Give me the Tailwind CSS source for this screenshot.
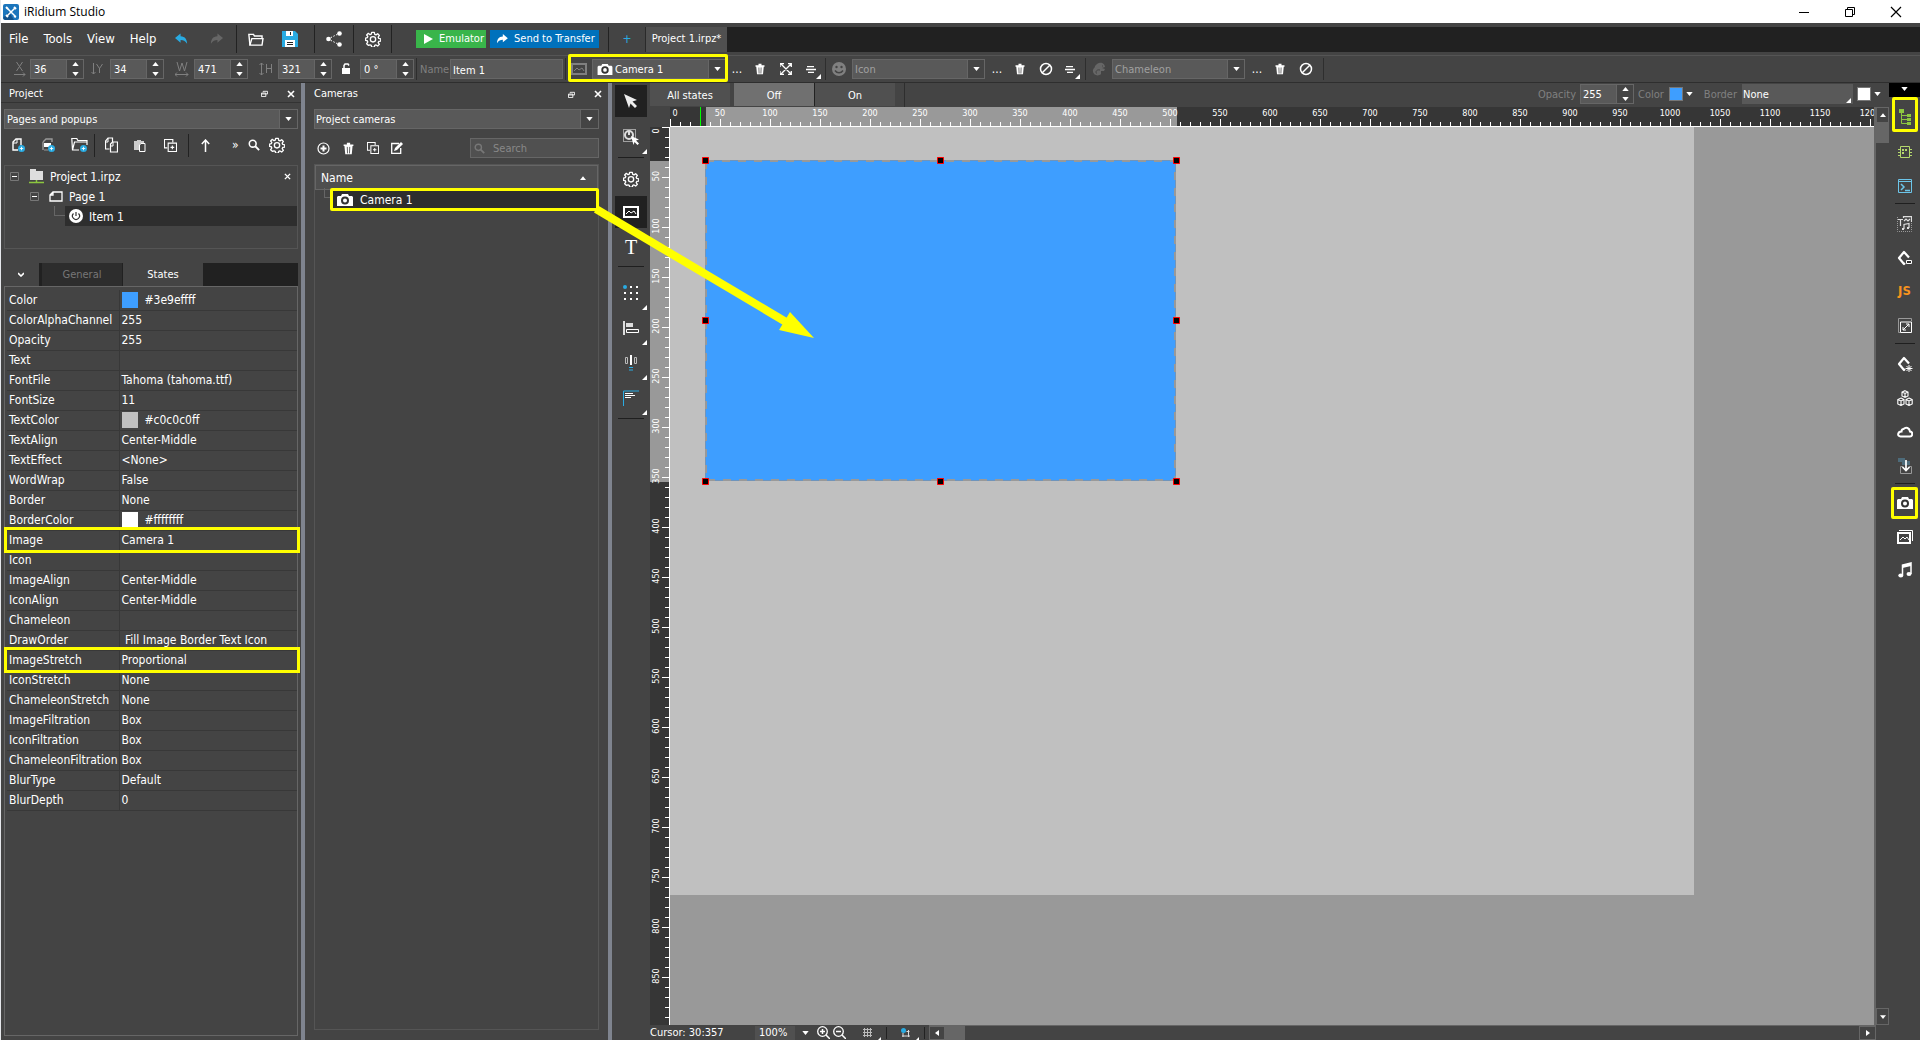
<!DOCTYPE html>
<html lang="en">
<head>
    <meta charset="UTF-8">
    <meta name="viewport" content="width=device-width, initial-scale=1.0">
    <title>iRidium Studio</title>
    <script src="https://cdn.jsdelivr.net/npm/@tailwindcss/browser@4"></script>
</head>
<body class="relative flex h-screen flex-col overflow-hidden border-l border-gray-200 bg-[#444444] font-['DejaVu_Sans_Condensed','DejaVu_Sans',sans-serif] text-[12px] leading-4 text-white">

    <!-- Icon set -->
    <svg class="hidden">
        <symbol id="i-gear" viewBox="0 0 24 24"><path d="M10 2h4l.6 3 1.9.8L19 4l2.500 2.700-1.700 2.500.8 1.900 3 .6v3.400l-3 .6-.8 1.900 1.700 2.500-2.500 2.500-2.500-1.700-1.900.8-.6 2.500h-4l-.6-2.500-1.900-.8L5 21.500 2.500 19l1.700-2.500-.8-1.900-2.600-.6v-3.400l2.600-.6.8-1.900L2.500 6 5 3.500l2.500 2 1.900-.8z" fill="none" stroke="currentColor" stroke-width="2" stroke-linejoin="round"/><circle cx="12" cy="12.500" r="4" fill="none" stroke="currentColor" stroke-width="2"/></symbol>
        <symbol id="i-trash" viewBox="0 0 16 16"><path d="M2 3h12v2H2zM6 1h4v2H6zM3 5h10l-1 10H4z" fill="currentColor"/><path d="M6.500 6l.3 8M9.500 6l-.3 8" stroke="#444444"/></symbol>
        <symbol id="i-camera" viewBox="0 0 16 14"><path d="M1 3h3l1-2h6l1 2h3l1 1v9H0V4z" fill="currentColor"/><circle cx="8" cy="7.500" r="3" fill="none" stroke="#333" stroke-width="2"/></symbol>
        <symbol id="i-down" viewBox="0 0 8 5"><path d="M0 0h8L4 5z" fill="currentColor"/></symbol>
        <symbol id="i-up" viewBox="0 0 8 5"><path d="M0 5h8L4 0z" fill="currentColor"/></symbol>
        <symbol id="i-corner" viewBox="0 0 5 5"><path d="M5 0v5H0z" fill="currentColor"/></symbol>
        <symbol id="i-ban" viewBox="0 0 14 14"><circle cx="7" cy="7" r="5.500" fill="none" stroke="currentColor" stroke-width="1.500"/><path d="M3 11l8-8" stroke="currentColor" stroke-width="1.500"/></symbol>
        <symbol id="i-lines" viewBox="0 0 10 7"><path d="M1 .5h7M0 3.500h10M2 6.500h6" stroke="currentColor" stroke-width="1.300"/></symbol>
        <symbol id="i-copy" viewBox="0 0 14 14"><path d="M3.500 9.500h-3v-9h9v3M4.500 4.500h9v9h-9z" fill="none" stroke="currentColor" stroke-width="1.200"/><path d="M7 9h4M9 7v4" stroke="currentColor" stroke-width="1.200"/></symbol>
        <symbol id="i-search" viewBox="0 0 14 14"><circle cx="5.500" cy="5.500" r="4" fill="none" stroke="currentColor" stroke-width="1.800"/><path d="M8.500 8.500L13 13" stroke="currentColor" stroke-width="2.200"/></symbol>
        <symbol id="i-float" viewBox="0 0 8 8"><path d="M2.500 2.500v-1h5v3h-2M.5 3.500h5v4h-5zM.5 4.500h5" fill="none" stroke="currentColor"/></symbol>
        <symbol id="i-close" viewBox="0 0 8 8"><path d="M1 1l6 6M7 1L1 7" stroke="currentColor" stroke-width="1.600"/></symbol>
        <symbol id="i-picture" viewBox="0 0 16 12"><path d="M1 1h14v10H1z" fill="none" stroke="currentColor" stroke-width="2"/><path d="M3 8l3-3 2 2 3-2 2 3" fill="none" stroke="currentColor"/></symbol>
        <symbol id="i-plus" viewBox="0 0 8 8"><circle cx="4" cy="4" r="4" fill="#29abe2"/><path d="M2 4h4M4 2v4" stroke="#fff"/></symbol>
        <symbol id="i-minus" viewBox="0 0 9 9"><path d="M.5.5h8v8h-8z" fill="none" stroke="#777"/><path d="M2 4.500h5" stroke="#fff"/></symbol>
        <symbol id="i-diamond" viewBox="0 0 16 16"><path d="M8 13l-1 1-5-6 5-6 5 5.500" fill="none" stroke="currentColor" stroke-width="2.200" stroke-linejoin="round"/></symbol>
    </svg>

    <!-- Title bar -->
    <header class="flex h-[23px] shrink-0 items-center bg-white pl-0.5 font-['Open_Sans',sans-serif] text-black">
        <svg class="h-4 w-4" viewBox="0 0 16 16"><rect width="16" height="16" rx="2" fill="#1b75bc"/><path d="M0 14l6-6 5 8H2z" fill="#12518a"/><path d="M4 12l8-8M4 4l8 8" stroke="#fff" stroke-width="1.500"/><path d="M11 3l2 2M3 3l2 2M3 11l2 2M11 12l2 1" stroke="#fff" stroke-width="2"/></svg>
        <h1 class="ml-[5px]">iRidium Studio</h1>
        <div class="ml-auto flex items-center gap-[34px] pr-[18px]">
            <button aria-label="Minimize"><svg class="h-3 w-3" viewBox="0 0 12 12"><path d="M1 6.500h10" stroke="#000"/></svg></button>
            <button aria-label="Restore"><svg class="h-3 w-3" viewBox="0 0 12 12"><path d="M1.500 3.500h7v7h-7zM3.500 3V1.500h7v7H9" fill="none" stroke="#000"/></svg></button>
            <button aria-label="Close"><svg class="h-3 w-3" viewBox="0 0 12 12"><path d="M1 1l10 10M11 1L1 11" stroke="#000" stroke-width="1.200"/></svg></button>
        </div>
    </header>

    <!-- Main toolbar -->
    <div class="flex h-[33px] shrink-0 items-center border-b border-[#555]">
        <nav class="flex w-[158px] gap-[15px] pl-2 text-[13px]">
            <a href="#file">File</a>
            <a href="#tools">Tools</a>
            <a href="#view">View</a>
            <a href="#help">Help</a>
        </nav>
        <div class="flex w-[77px] items-center gap-[22px] pl-4">
            <button aria-label="Undo"><svg class="h-3 w-[13px] text-[#29abe2]" viewBox="0 0 14 12"><path d="M6 0v3c5 0 7 4 7 8-2-3-4-4-7-4v3L0 5z" fill="currentColor"/></svg></button>
            <button aria-label="Redo"><svg class="h-3 w-[13px] text-[#666]" viewBox="0 0 14 12"><path d="M8 0v3c-5 0-7 4-7 8 2-3 4-4 7-4v3l6-5z" fill="currentColor"/></svg></button>
        </div>
        <div class="flex h-7 w-[78px] items-center gap-[18px] border-l border-[#222] pl-[11px]">
            <button aria-label="Open"><svg class="h-[13px] w-4" viewBox="0 0 17 14"><path d="M2 13L.8 1.500h5l1 1.700H15V6" fill="none" stroke="#fff" stroke-width="1.500"/><path d="M2 13L4 6h12l-1 7z" fill="none" stroke="#fff" stroke-width="1.500"/></svg></button>
            <button aria-label="Save"><svg class="h-4 w-4" viewBox="0 0 16 16"><path d="M0 0h13l3 3v13H0z" fill="#29abe2"/><path d="M4 0h7v5H4zM3 9h10v7H3z" fill="#fff"/><path d="M8.500 1v3M5 11.500h6M5 13.500h6" stroke="#222"/></svg></button>
        </div>
        <div class="flex h-7 w-[39px] items-center border-l border-[#222] pl-[11px]">
            <button aria-label="Share"><svg class="h-4 w-4" viewBox="0 0 16 16"><path d="M2 8l12-6M2 8l12 6" stroke="#fff" stroke-dasharray="1.500 1.500"/><g fill="#fff"><circle cx="2.500" cy="8" r="2.300"/><circle cx="13.500" cy="2.500" r="2.300"/><circle cx="13.500" cy="13.500" r="2.300"/></g></svg></button>
        </div>
        <div class="flex h-7 w-[39px] items-center border-x border-[#222] pl-[11px]">
            <button aria-label="Settings"><svg class="h-4 w-4"><use href="#i-gear"/></svg></button>
        </div>
        <button class="ml-6 flex h-[18px] w-[70px] items-center gap-1.5 bg-[#39b54a] pl-2 text-[11px]"><svg class="h-[10px] w-[9px]" viewBox="0 0 9 10"><path d="M0 0l9 5-9 5z" fill="#fff"/></svg>Emulator</button>
        <button class="ml-1 flex h-[18px] w-[109px] items-center gap-1.5 bg-[#0071bc] pl-1.5 text-[11px]"><svg class="h-[10px] w-3" viewBox="0 0 14 12"><path d="M8 0v3c-5 0-7 4-7 8 2-3 4-4 7-4v3l6-5z" fill="#fff"/></svg>Send to Transfer</button>
        <div class="ml-[9px] flex h-[25px] flex-1 border-l border-[#222] bg-[#212121]">
            <button class="w-[37px] border-r border-[#2a2a2a] bg-[#444] text-[#29abe2]" aria-label="New tab">+</button>
            <button class="w-[81px] bg-[#505050] text-[11px]">Project 1.irpz*</button>
        </div>
    </div>

    <!-- Item property bar -->
    <div class="flex h-[27px] shrink-0 items-center border-b border-[#2e2e2e] text-[#808080]">
        <label class="flex w-[29px] justify-center pl-2" for="pos-x"><svg class="h-4 w-3" viewBox="0 0 12 16"><path d="M2.500 1l6 9M8.500 1l-6 9M0 13.500h11M9 11.500l2 2-2 2" fill="none" stroke="currentColor"/></svg></label>
        <span class="spin flex h-5 w-[54px] border border-[#666] bg-[#595959]"><input id="pos-x" value="36" class="w-[35px] pt-0.5 pl-[3px] text-[11px] text-white"></span>
        <label class="flex w-[26px] justify-center" for="pos-y"><svg class="h-4 w-3" viewBox="0 0 12 16"><path d="M2.500 2v11M.5 11l2 2 2-2M5.500 3l3 4.500L11.500 3M8.500 7v5" fill="none" stroke="currentColor"/></svg></label>
        <span class="spin flex h-5 w-[54px] border border-[#666] bg-[#595959]"><input id="pos-y" value="34" class="w-[35px] pt-0.5 pl-[3px] text-[11px] text-white"></span>
        <label class="flex w-[30px] justify-end pr-[5px]" for="size-w"><svg class="h-4 w-[14px]" viewBox="0 0 14 16"><path d="M2 1l2.500 9L7 2l2.500 8L12 1M0 13.500h13M2 11.500l-2 2 2 2M11 11.500l2 2-2 2" fill="none" stroke="currentColor"/></svg></label>
        <span class="spin flex h-5 w-[54px] border border-[#666] bg-[#595959]"><input id="size-w" value="471" class="w-[35px] pt-0.5 pl-[3px] text-[11px] text-white"></span>
        <label class="flex w-[30px] justify-end pr-[5px]" for="size-h"><svg class="h-4 w-[14px]" viewBox="0 0 14 16"><path d="M2.500 2v12M.5 4l2-2 2 2M.5 12l2 2 2-2M7.500 3v9M12.500 3v9M7.500 7.500h5" fill="none" stroke="currentColor"/></svg></label>
        <span class="spin flex h-5 w-[54px] border border-[#666] bg-[#595959]"><input id="size-h" value="321" class="w-[35px] pt-0.5 pl-[3px] text-[11px] text-white"></span>
        <button class="flex w-7 justify-center text-white" aria-label="Lock proportions"><svg class="h-3 w-2.5" viewBox="0 0 10 12"><path d="M1 5h8v6H1z" fill="currentColor"/><path d="M3 5V2.500L4 1h3l1 1.500" fill="none" stroke="currentColor" stroke-width="1.500"/></svg></button>
        <span class="spin flex h-5 w-[54px] border border-[#666] bg-[#595959]"><input id="angle" value="0 °" aria-label="Rotation" class="w-[35px] pt-0.5 pl-[3px] text-[11px] text-white"></span>
        <label class="ml-0.5 flex h-[22px] w-[34px] items-center border-l border-[#2e2e2e] pt-0.5 pl-[3px] text-[11px]" for="name">Name</label>
        <input id="name" value="Item 1" class="h-5 w-[113px] border border-[#666] bg-[#595959] pt-0.5 pl-0.5 text-[11px] text-white">
        <div class="relative ml-0.5 flex h-[22px] items-center border-l border-[#2e2e2e] pl-[5px]">
            <svg class="h-3 w-4"><use href="#i-picture"/></svg>
            <span class="ml-[5px] flex h-5 w-[134px] items-center border border-[#666] bg-[#595959] pl-1 text-white">
                <svg class="h-[13px] w-4 shrink-0"><use href="#i-camera"/></svg>
                <select class="min-w-0 flex-1 appearance-none pt-0.5 pl-0.5 text-[11px]" aria-label="Image"><option>Camera 1</option></select>
                <span class="pointer-events-none flex h-full w-[17px] items-center justify-center border-l border-[#666] bg-[#444]"><svg class="h-1 w-[7px]"><use href="#i-down"/></svg></span>
            </span>
            <span class="pointer-events-none absolute -top-1 -right-0.5 bottom-[-2px] left-[2px] rounded-xs border-3 border-[#ffff00]"></span>
        </div>
        <div class="flex w-[99px] items-center text-white">
            <button class="w-[22px] text-center" aria-label="Browse image">...</button>
            <button class="ml-1.5" aria-label="Clear image"><svg class="h-3 w-3"><use href="#i-trash"/></svg></button>
            <button class="ml-3.5" aria-label="Stretch image"><svg class="h-3 w-3" viewBox="0 0 12 12"><path d="M1 1l10 10M11 1L1 11M0 4V.7h4M8 .7h3.300V4M0 8v3.300h4M8 11.300h3.300V8" fill="none" stroke="currentColor" stroke-width="1.300"/></svg></button>
            <button class="ml-3.5 flex items-center" aria-label="Image align"><svg class="h-[7px] w-[10px]"><use href="#i-lines"/></svg><svg class="mt-[14px] h-[5px] w-[5px]"><use href="#i-corner"/></svg></button>
        </div>
        <div class="flex h-[22px] w-[260px] items-center border-l border-[#2e2e2e] pl-1.5">
            <svg class="h-[14px] w-[14px]" viewBox="0 0 14 14"><circle cx="7" cy="7" r="7" fill="currentColor"/><circle cx="4.500" cy="5" r="1.200" fill="#444"/><circle cx="9.500" cy="5" r="1.200" fill="#444"/><path d="M3 8.500c2 3 6 3 8 0" fill="none" stroke="#444" stroke-width="1.500"/></svg>
            <span class="ml-1.5 flex h-5 w-[133px] items-center border border-[#666] bg-[#595959]">
                <select class="min-w-0 flex-1 appearance-none pt-0.5 pl-0.5 text-[11px] text-[#a0a0a0]" aria-label="Icon"><option>Icon</option></select>
                <span class="pointer-events-none flex h-full w-[17px] items-center justify-center border-l border-[#666] bg-[#444] text-white"><svg class="h-1 w-[7px]"><use href="#i-down"/></svg></span>
            </span>
            <button class="w-6 text-center text-white" aria-label="Browse icon">...</button>
            <button class="ml-[5px] text-white" aria-label="Clear icon"><svg class="h-3 w-3"><use href="#i-trash"/></svg></button>
            <button class="ml-[13px] text-white" aria-label="No icon"><svg class="h-[14px] w-[14px]"><use href="#i-ban"/></svg></button>
            <button class="ml-3 flex items-center text-white" aria-label="Icon align"><svg class="h-[7px] w-[10px]"><use href="#i-lines"/></svg><svg class="mt-[14px] h-[5px] w-[5px]"><use href="#i-corner"/></svg></button>
        </div>
        <div class="flex h-[22px] w-[239px] items-center border-x border-[#2e2e2e] pl-1.5">
            <svg class="h-[14px] w-[14px] text-[#666]" viewBox="0 0 14 14"><path d="M5 2c4-3 8 0 8 3l-3 1 3 1-1 2H9v3c-3 3-9 1-8-4 .5-2 2-2 2-4z" fill="currentColor"/><path d="M8 8c-4-1-5 3-3 3.500M10 4h1" fill="none" stroke="#444"/></svg>
            <span class="ml-1.5 flex h-5 w-[133px] items-center border border-[#666] bg-[#595959]">
                <select class="min-w-0 flex-1 appearance-none pt-0.5 pl-0.5 text-[11px] text-[#a0a0a0]" aria-label="Chameleon"><option>Chameleon</option></select>
                <span class="pointer-events-none flex h-full w-[17px] items-center justify-center border-l border-[#666] bg-[#444] text-white"><svg class="h-1 w-[7px]"><use href="#i-down"/></svg></span>
            </span>
            <button class="w-6 text-center text-white" aria-label="Browse chameleon">...</button>
            <button class="ml-[5px] text-white" aria-label="Clear chameleon"><svg class="h-3 w-3"><use href="#i-trash"/></svg></button>
            <button class="ml-[13px] text-white" aria-label="No chameleon"><svg class="h-[14px] w-[14px]"><use href="#i-ban"/></svg></button>
        </div>
    </div>

    <main class="flex min-h-0 flex-1">
        <!-- Project panel -->
        <section class="flex w-[300px] shrink-0 flex-col">
            <div class="flex h-5 items-center border-b border-[#333] pt-0.5 pr-[6px] pl-2 text-[11px]">
                <h2>Project</h2>
                <button class="ml-auto" aria-label="Float panel"><svg class="h-[7px] w-[7px]"><use href="#i-float"/></svg></button>
                <button class="ml-[19px]" aria-label="Close panel"><svg class="h-2 w-2"><use href="#i-close"/></svg></button>
            </div>
            <div class="mt-1.5 mr-[3px] ml-[3px] flex h-5 shrink-0 items-center border border-[#666] bg-[#595959]">
                <select class="flex-1 appearance-none pt-0.5 pl-0.5 text-[11px]" aria-label="Project view"><option>Pages and popups</option></select>
                <span class="pointer-events-none flex h-full w-[18px] items-center justify-center border-l border-[#666] bg-[#444]"><svg class="h-1 w-[7px]"><use href="#i-down"/></svg></span>
            </div>
            <div class="mt-1 flex h-6 shrink-0 items-center">
                <div class="flex w-[93px] gap-[14px] pl-2.5">
                    <button aria-label="Add page"><svg class="h-4 w-4" viewBox="0 0 16 16"><path d="M7 13H2V5l3-3h5v6" fill="none" stroke="#fff" stroke-width="1.400"/><path d="M2 6h4V2" fill="none" stroke="#fff"/><use href="#i-plus" x="7" y="8" width="7" height="7"/></svg></button>
                    <button aria-label="Add popup"><svg class="h-4 w-4" viewBox="0 0 16 16"><path d="M2 5l3-3h6v3M2 13V5" fill="none" stroke="#999" stroke-width="1.400"/><path d="M3 6h7v4H3z" fill="#fff"/><path d="M3 13h4" stroke="#999"/><use href="#i-plus" x="7" y="8" width="7" height="7"/></svg></button>
                    <button aria-label="Add folder"><svg class="h-4 w-[17px]" viewBox="0 0 17 16"><path d="M8 13H1.500L.8 1.500h5l1 2H16V8M1.500 13l2-8H16" fill="none" stroke="#fff" stroke-width="1.200"/><use href="#i-plus" x="9" y="8" width="7" height="7"/></svg></button>
                </div>
                <div class="flex h-[23px] w-[94px] items-center gap-4 border-l border-[#222] pl-2.5">
                    <button aria-label="Copy"><svg class="h-4 w-[13px]" viewBox="0 0 13 16"><path d="M4.500 12h-4V4L3 1h4.500v4M6 6.500L7.500 5h5v10h-7V7z" fill="none" stroke="#fff" stroke-width="1.200"/><path d="M5.500 9H8V5M.5 5H3V1" fill="none" stroke="#fff"/></svg></button>
                    <button aria-label="Paste"><svg class="h-[13px] w-3" viewBox="0 0 12 13"><path d="M0 2h3V1h4v1h3v9H0z" fill="#ccc"/><path d="M5.500 6L7 4.500h4v8H5.500z" fill="#444" stroke="#fff"/></svg></button>
                    <button aria-label="Duplicate"><svg class="ml-0.5 h-[13px] w-[13px]"><use href="#i-copy"/></svg></button>
                </div>
                <div class="flex h-[23px] flex-1 items-center border-l border-[#222] pl-3">
                    <button aria-label="Move up"><svg class="h-[13px] w-[9px]" viewBox="0 0 9 13"><path d="M4.500 13V1M.8 5l3.700-4 3.700 4" fill="none" stroke="#fff" stroke-width="1.500"/></svg></button>
                    <button class="ml-[22px]" aria-label="More">»</button>
                    <button class="ml-[9px]" aria-label="Search"><svg class="h-3 w-3"><use href="#i-search"/></svg></button>
                    <button class="ml-[9px]" aria-label="Settings"><svg class="h-4 w-4"><use href="#i-gear"/></svg></button>
                </div>
            </div>

            <!-- Project tree -->
            <ul class="mx-[3px] mt-2 h-[84px] shrink-0 border border-[#555]">
                <li class="flex h-5 items-center pr-[6px] pl-[5px]"><svg class="h-[9px] w-[9px]"><use href="#i-minus"/></svg>
                    <svg class="ml-2.5 h-4 w-[15px]" viewBox="0 0 15 16"><path d="M1 1h6v2h7v9H1z" fill="#ddd"/><path d="M0 14.500h15M7.500 12v2" stroke="#8cc63f" stroke-width="1.500"/></svg>
                    <span class="ml-1.5 pt-px">Project 1.irpz</span>
                    <button class="ml-auto" aria-label="Close project"><svg class="h-[7px] w-[7px]"><use href="#i-close"/></svg></button></li>
                <li class="flex h-5 items-center pl-[25px]"><svg class="h-[9px] w-[9px]"><use href="#i-minus"/></svg>
                    <svg class="ml-2.5 h-[11px] w-[14px]" viewBox="0 0 14 11"><path d="M1 4l3-3h9v9H1zM1 4h3V1" fill="none" stroke="#fff" stroke-width="1.300"/></svg>
                    <span class="ml-1.5 pt-px">Page 1</span></li>
                <li class="flex h-5 items-center pl-[49px]"><span class="mb-2.5 h-2.5 w-[11px] border-b border-l border-[#666]"></span>
                    <span class="flex h-5 flex-1 items-center bg-[#2e2e2e] pl-1"><svg class="h-[14px] w-[14px]" viewBox="0 0 14 14"><circle cx="7" cy="7" r="7" fill="#fff"/><path d="M4.500 4.500a3.500 3.500 0 1 0 5 0M7 3v4" fill="none" stroke="#333" stroke-width="1.200"/></svg><span class="ml-1.5 pt-px">Item 1</span></span></li>
            </ul>

            <!-- Property tabs -->
            <div class="mx-[3px] mt-[14px] flex h-[23px] shrink-0">
                <button class="w-[35px] pl-[14px]" aria-label="Collapse"><svg class="h-[5px] w-1.5" viewBox="0 0 6 5"><path d="M0 1l3 3 3-3" fill="none" stroke="#fff" stroke-width="1.600"/></svg></button>
                <div class="flex flex-1 bg-[#212121] pl-[3px] text-[11px]">
                    <button class="w-20 bg-[#2d2d2d] pt-px text-[#777]">General</button>
                    <button class="ml-px w-20 bg-[#444] pt-px">States</button>
                </div>
            </div>
            <div class="mx-[3px] mb-1 min-h-0 flex-1 border border-[#666] pt-[3px] pr-0 pl-0.5">
                <table class="w-full table-fixed border-collapse">
                    <colgroup><col class="w-[112px]"><col></colgroup>
                    <tbody id="props"></tbody>
                </table>
            </div>
        </section>

        <div class="w-1 shrink-0 bg-[#7f848f]"></div>

        <!-- Cameras panel -->
        <section class="flex w-[303px] shrink-0 flex-col pr-[9px] pl-[9px]">
            <div class="flex h-5 shrink-0 items-center pt-0.5 text-[11px]">
                <h2>Cameras</h2>
                <button class="ml-auto" aria-label="Float panel"><svg class="h-[7px] w-[7px]"><use href="#i-float"/></svg></button>
                <button class="-mr-[3px] ml-[19px]" aria-label="Close panel"><svg class="h-2 w-2"><use href="#i-close"/></svg></button>
            </div>
            <div class="mt-1.5 flex h-5 shrink-0 items-center border border-[#666] bg-[#595959]">
                <select class="flex-1 appearance-none pt-0.5 pl-px text-[11px]" aria-label="Camera source"><option>Project cameras</option></select>
                <span class="pointer-events-none flex h-full w-[18px] items-center justify-center border-l border-[#666] bg-[#444]"><svg class="h-1 w-[7px]"><use href="#i-down"/></svg></span>
            </div>
            <div class="mt-[9px] flex h-5 shrink-0 items-center gap-3 pl-[3px]">
                <button aria-label="Add camera"><svg class="h-[13px] w-[13px]" viewBox="0 0 13 13"><circle cx="6.500" cy="6.500" r="5.500" fill="none" stroke="#fff" stroke-width="1.200"/><path d="M3.500 6.500h6M6.500 3.500v6" stroke="#fff" stroke-width="2"/></svg></button>
                <button aria-label="Delete camera"><svg class="h-[13px] w-[13px]"><use href="#i-trash"/></svg></button>
                <button aria-label="Duplicate camera"><svg class="h-3 w-3"><use href="#i-copy"/></svg></button>
                <button aria-label="Edit camera"><svg class="h-3 w-3" viewBox="0 0 12 12"><path d="M8 1.500H.7v9.800h9V6" fill="none" stroke="#fff" stroke-width="1.300"/><path d="M3 9l1-3 6-6 2 2-6 6z" fill="#fff"/></svg></button>
                <label class="ml-auto flex h-5 w-[129px] items-center gap-2 border border-[#666] bg-[#505050] pl-[3px] text-[#777]">
                    <svg class="h-[11px] w-[11px] shrink-0"><use href="#i-search"/></svg>
                    <input type="search" placeholder="Search" aria-label="Search" class="w-full pt-0.5 text-[11px] placeholder:text-[#888]">
                </label>
            </div>
            <div class="mt-1.5 mb-2.5 flex-1 border border-[#555]">
                <table class="w-full border-collapse">
                    <thead><tr class="h-6 border border-[#666] bg-[#4f4f4f]"><th class="pl-[5px] text-left font-normal">Name</th><th class="w-[18px]"><svg class="h-1 w-[6px]"><use href="#i-up"/></svg></th></tr></thead>
                </table>
                <div class="-mt-0.5 flex"><span class="ml-[9px] h-2.5 w-1.5 border-b border-l border-[#666]"></span>
                    <button class="-mr-px flex h-[23px] flex-1 items-center gap-[7px] rounded-xs border-3 border-[#ffff00] bg-[#2e2e2e] pl-1"><svg class="h-[14px] w-4"><use href="#i-camera"/></svg>Camera 1</button>
                </div>
            </div>
        </section>

        <div class="w-1 shrink-0 bg-[#7f848f]"></div>

        <!-- Tool palette -->
        <div class="flex w-[38px] shrink-0 flex-col pt-0.5 pl-[3px]">
            <button class="flex h-8 w-8 shrink-0 items-center justify-center bg-[#212121]" aria-label="Select"><svg class="h-[15px] w-[14px]" viewBox="0 0 14 15"><path d="M0 0l13 6-4.500 1.500L13 12l-2 2-4.500-4.500L5 14z" fill="#eee"/></svg></button>
            <button class="relative mt-[3px] flex h-[34px] w-8 shrink-0 items-center justify-center" aria-label="Smart select"><svg class="h-4 w-4" viewBox="0 0 16 16"><path d="M.5.5h12v12H.5z" fill="none" stroke="#fff" stroke-dasharray="1 1"/><circle cx="6" cy="6" r="4" fill="none" stroke="#ddd" stroke-width="2"/><path d="M6 3v3" stroke="#ddd" stroke-width="2"/><path d="M8 7l8 3.500-3 1 3 3-1.500 1.500-3-3-1 3z" fill="#fff"/></svg><svg class="absolute right-0 bottom-0 h-[5px] w-[5px]"><use href="#i-corner"/></svg></button>
            <hr class="mt-[3px] ml-[3px] w-[26px] border-[#1f1f1f]">
            <button class="flex h-[41px] w-8 shrink-0 items-center justify-center" aria-label="Settings"><svg class="h-4 w-4"><use href="#i-gear"/></svg></button>
            <button class="-mt-[3px] flex h-8 w-8 shrink-0 items-center justify-center bg-[#212121]" aria-label="Image"><svg class="h-3 w-4"><use href="#i-picture"/></svg></button>
            <button class="flex h-[38px] w-8 shrink-0 items-center justify-center font-['Liberation_Serif',serif] text-[20px]" aria-label="Text">T</button>
            <hr class="ml-[3px] w-[26px] border-[#1f1f1f]">
            <button class="relative mt-[9px] flex h-[34px] w-8 shrink-0 items-center justify-center" aria-label="Grid anchor"><svg class="h-4 w-4" viewBox="0 0 16 16"><path d="M7 1h2v2H7zM13 1h2v2h-2zM1 7h2v2H1zM7 7h2v2H7zM13 7h2v2h-2zM1 13h2v2H1zM7 13h2v2H7zM13 13h2v2h-2z" fill="#fff"/><circle cx="2" cy="2" r="2" fill="#29abe2"/></svg><svg class="absolute right-0 bottom-0 h-[5px] w-[5px]"><use href="#i-corner"/></svg></button>
            <button class="relative flex h-[35px] w-8 shrink-0 items-center justify-center" aria-label="Align"><svg class="h-[14px] w-4" viewBox="0 0 16 14"><path d="M0 0h2v14H0zM3 2h7v4H3z" fill="#ddd"/><path d="M3.500 8.500h12v3h-12z" fill="none" stroke="#fff"/></svg><svg class="absolute right-0 bottom-0 h-[5px] w-[5px]"><use href="#i-corner"/></svg></button>
            <button class="relative flex h-[35px] w-8 shrink-0 items-center justify-center" aria-label="Distribute"><svg class="h-4 w-3" viewBox="0 0 12 16"><path d="M.5 2.500h2v6h-2zM9.500 2.500h2v6h-2z" fill="none" stroke="#bbb"/><path d="M6 0v10" stroke="#fff" stroke-width="2"/><path d="M4 12.500h4M4 15h4" stroke="#29abe2"/></svg><svg class="absolute right-0 bottom-0 h-[5px] w-[5px]"><use href="#i-corner"/></svg></button>
            <button class="relative flex h-[35px] w-8 shrink-0 items-center justify-center" aria-label="Snap"><svg class="h-4 w-4" viewBox="0 0 16 16"><path d="M.5 16V1H16" fill="none" stroke="#29abe2"/><path d="M2 3.500h8M2 5.500h10M2 7.500h6" stroke="#fff"/></svg><svg class="absolute right-0 bottom-0 h-[5px] w-[5px]"><use href="#i-corner"/></svg></button>
            <hr class="mt-[3px] ml-[3px] w-[26px] border-[#1f1f1f]">
        </div>

        <!-- Editor -->
        <section class="flex min-w-0 flex-1 flex-col">
            <div class="flex h-6 shrink-0 items-start text-[#808080]">
                <button class="h-[23px] w-20 bg-[#505050] pt-0.5 text-[11px] text-white">All states</button>
                <button class="ml-1 h-[23px] w-20 bg-[#707070] pt-0.5 text-[11px] text-white">Off</button>
                <button class="h-[23px] w-[81px] border-l border-[#222] bg-[#505050] pt-0.5 text-[11px] text-white">On</button>
                <span class="ml-[9px] h-6 border-l border-[#2e2e2e]"></span>
                <div class="ml-auto flex h-6 items-center pb-0.5 text-[11px]">
                    <label class="pt-px" for="opacity">Opacity</label>
                    <span class="spin ml-1 flex h-5 w-[54px] border border-[#666] bg-[#595959]"><input id="opacity" value="255" class="w-[35px] pt-0.5 pl-0.5 text-white"></span>
                    <span class="ml-1 pt-px">Color</span>
                    <button class="ml-[5px] h-[14px] w-[14px] border border-[#777] bg-[#3e9eff]" aria-label="Color"></button>
                    <svg class="ml-[3px] h-1 w-[7px] text-white"><use href="#i-down"/></svg>
                    <label class="ml-[11px] pt-px" for="border">Border</label>
                    <span class="relative ml-[5px] flex h-5 w-[111px] bg-[#595959]"><select id="border" class="w-full appearance-none px-px pt-0.5 text-[11px] text-white"><option>None</option></select><svg class="absolute right-0.5 bottom-px h-[5px] w-[5px] text-white"><use href="#i-corner"/></svg></span>
                    <button class="ml-1 h-[14px] w-[14px] border border-[#777] bg-white" aria-label="Border color"></button>
                    <svg class="mr-2 ml-[3px] h-1 w-[7px] text-white"><use href="#i-down"/></svg>
                </div>
            </div>
            <div class="flex min-h-0 flex-1">
                <div class="grid min-w-0 flex-1 grid-cols-[20px_1fr] grid-rows-[20px_1fr]">
                    <span></span>
                    <svg id="ruler-x" class="h-5 w-full bg-[#363636] text-[9px]"></svg>
                    <svg id="ruler-y" class="h-full w-5 bg-[#363636] text-[9px]"></svg>
                    <div class="relative overflow-hidden bg-[#999999]">
                        <div class="relative h-[768px] w-[1024px] bg-[#c0c0c0]">
                            <svg class="absolute top-[28px] left-[30px] h-[331px] w-[481px]" viewBox="0 0 481 331">
                                <rect x="5" y="5" width="471" height="321" fill="#3e9eff"/>
                                <rect x="5.500" y="5.500" width="470" height="320" fill="none" stroke="#6f94bb"/>
                                <rect x="6" y="6" width="469" height="319" fill="none" stroke="#999" stroke-width="2" stroke-dasharray="8 8"/>
                                <g fill="#000" stroke="#f00"><path d="M2.500 2.500h6v6h-6zM237.500 2.500h6v6h-6zM473.500 2.500h6v6h-6zM2.500 162.500h6v6h-6zM473.500 162.500h6v6h-6zM2.500 323.500h6v6h-6zM237.500 323.500h6v6h-6zM473.500 323.500h6v6h-6z"/></g>
                            </svg>
                        </div>
                    </div>
                </div>
                <div class="flex w-[15px] shrink-0 flex-col border-l-2 border-[#666]">
                    <button class="flex h-4 items-center justify-center border border-[#666]" aria-label="Scroll up"><svg class="h-1 w-1.5"><use href="#i-up"/></svg></button>
                    <span class="h-5 bg-[#666]"></span>
                    <button class="mt-auto flex h-[17px] items-center justify-center border border-[#666]" aria-label="Scroll down"><svg class="h-1 w-1.5"><use href="#i-down"/></svg></button>
                </div>
            </div>
            <div class="mr-[13px] flex h-[15px] shrink-0 items-center">
                <span class="w-[105px] text-[11px]">Cursor: 30:357</span>
                <input aria-label="Zoom" value="100%" class="h-[14px] w-10 bg-[#505050] pl-1 text-[11px]">
                <svg class="ml-[7px] h-1 w-[7px]"><use href="#i-down"/></svg>
                <button class="ml-2" aria-label="Zoom in"><svg class="h-[13px] w-[13px]" viewBox="0 0 13 13"><circle cx="5.500" cy="5.500" r="4.800" fill="none" stroke="#fff" stroke-width="1.300"/><path d="M9 9l4 4M3 5.500h5M5.500 3v5" stroke="#fff" stroke-width="1.500"/></svg></button>
                <button class="ml-[3px]" aria-label="Zoom out"><svg class="h-[13px] w-[13px]" viewBox="0 0 13 13"><circle cx="5.500" cy="5.500" r="4.800" fill="none" stroke="#fff" stroke-width="1.300"/><path d="M9 9l4 4M3 5.500h5" stroke="#fff" stroke-width="1.500"/></svg></button>
                <button class="ml-[17px] flex items-end gap-[5px]" aria-label="Grid"><svg class="h-[9px] w-[9px]" viewBox="0 0 9 9"><path d="M1.500 0v9M4.500 0v9M7.500 0v9M0 1.500h9M0 4.500h9M0 7.500h9" stroke="#bbb"/></svg><svg class="-mb-1 h-1 w-1"><use href="#i-corner"/></svg></button>
                <span class="ml-[5px] h-3 border-l border-[#222]"></span>
                <button class="ml-[14px] flex items-end gap-[5px]" aria-label="Guides"><svg class="h-[9px] w-[9px]" viewBox="0 0 9 9"><path d="M1 8h8M2 5v4M7.500 2v7M5.500 3.500h3" stroke="#ddd"/><circle cx="2.500" cy="2.500" r="2.500" fill="#29abe2"/></svg><svg class="-mb-1 h-1 w-1"><use href="#i-corner"/></svg></button>
                <span class="ml-[5px] h-3 border-l border-[#222]"></span>
                <div class="ml-1 flex h-full flex-1 border-t border-[#666]">
                    <button class="flex w-4 items-center justify-center border border-[#666]" aria-label="Scroll left"><svg class="h-1.5 w-1" viewBox="0 0 4 6"><path d="M4 0v6L0 3z" fill="#fff"/></svg></button>
                    <span class="w-5 bg-[#666]"></span>
                    <button class="ml-auto flex w-[17px] items-center justify-center border border-[#666]" aria-label="Scroll right"><svg class="h-1.5 w-1" viewBox="0 0 4 6"><path d="M0 0v6l4-3z" fill="#fff"/></svg></button>
                </div>
            </div>
        </section>

        <!-- Right dock -->
        <aside class="flex w-[31px] shrink-0 flex-col items-center">
            <button class="flex h-[14px] w-full shrink-0 justify-center bg-black pt-1" aria-label="Expand dock"><svg class="h-1 w-[7px]"><use href="#i-down"/></svg></button>
            <button class="flex h-[35px] w-[26px] shrink-0 items-center justify-center rounded-xs border-3 border-[#ffff00] pt-1" aria-label="Project tree"><svg class="h-4 w-3" viewBox="0 0 12 16"><path d="M0 0h5v4H0zM8 5h4v3H8zM8 9h4v3H8zM8 13h4v3H8z" fill="#8cc63f"/><path d="M2.500 4v10.500H8M2.500 6.500H8M2.500 10.500H8" fill="none" stroke="#8cc63f"/></svg></button>
            <button class="flex h-[39px] shrink-0 items-center" aria-label="Drivers"><svg class="h-3 w-[14px]" viewBox="0 0 14 12"><path d="M2.500.5h9v11h-9zM0 3.500h2M0 6.500h2M0 9.500h2M12 3.500h2M12 6.500h2M12 9.500h2" fill="none" stroke="#b4d96c"/><path d="M4 3h2v2H4zM7 3h2v2H7zM4 6h2v2H4z" fill="#b4d96c"/></svg></button>
            <button class="flex h-[29px] shrink-0 items-center" aria-label="Console"><svg class="h-[14px] w-[14px]" viewBox="0 0 14 14"><path d="M.5.5h13v13H.5zM.5 2.500h13" fill="none" stroke="#6cc5e9"/><path d="M3 5l3 3-3 3M7 11.500h5" fill="none" stroke="#6cc5e9" stroke-width="1.500"/></svg></button>
            <hr class="mt-[3px] w-5 border-[#1f1f1f]">
            <button class="flex h-10 shrink-0 items-center" aria-label="Styles"><svg class="h-4 w-[15px]" viewBox="0 0 15 16"><path d="M.5 1v14.500h14V1" fill="none" stroke="#999" stroke-dasharray="1 1"/><path d="M1 3.500h5M3.500 3.500V10M6.500 2V.7h8V6M7 5l2-2 2 2 2-2M7 13V8.500l5-1V12" fill="none" stroke="#ddd" stroke-width="1.200"/><path d="M5 12h2v2H5zM10 11h2v2h-2z" fill="#ddd"/></svg></button>
            <button class="flex h-7 shrink-0 items-center" aria-label="Tokens"><svg class="h-4 w-4" viewBox="0 0 16 16"><use href="#i-diamond"/><path d="M9.500 10.500h5v3h-5z" fill="#333" stroke="#fff"/></svg></button>
            <button class="flex h-[38px] shrink-0 items-center text-[13px] font-bold text-[#f7931e]" aria-label="Scripts">JS</button>
            <button class="flex h-[30px] shrink-0 items-center" aria-label="Resize"><svg class="h-[15px] w-[14px]" viewBox="0 0 14 15"><path d="M2 14.500H.5V.5h13V3" fill="none" stroke="#999"/><path d="M2.500 4h11v10.500h-11z" fill="none" stroke="#fff"/><path d="M5 12l6-6M8 6h3v3M5 9v3h3" fill="none" stroke="#fff"/></svg></button>
            <hr class="mt-[3px] w-5 border-[#1f1f1f]">
            <button class="flex h-10 shrink-0 items-center" aria-label="Token settings"><svg class="h-4 w-4" viewBox="0 0 16 16"><use href="#i-diamond"/><path d="M12 9v7M8.500 12.500h7M9.500 10l5 5M14.500 10l-5 5" stroke="#fff"/></svg></button>
            <button class="flex h-[28px] shrink-0 items-center" aria-label="Modules"><svg class="h-4 w-4" viewBox="0 0 16 16"><path d="M8 .7l3 1.300v4L8 7.500 5 6V2zM5 2l3 1.500L11 2M8 3.500v4M4 8l3 1.500V14l-3 1.500L.8 14V9.500zM.8 9.500L4 11l3-1.500M4 11v4M12 8l3.200 1.500V14L12 15.500 9 14V9.500zM9 9.500l3 1.500 3.200-1.500M12 11v4" fill="none" stroke="#fff" stroke-width="1.100"/></svg></button>
            <button class="flex h-[39px] shrink-0 items-center" aria-label="Cloud"><svg class="h-3 w-4" viewBox="0 0 16 12"><path d="M3.500 10.500h9a2.500 2.500 0 0 0 .5-5C12.500 2 9 .5 6.500 3 5 3 4.500 4 4.500 5.500c-4 0-4.500 5-1 5z" fill="none" stroke="#fff" stroke-width="2"/></svg></button>
            <button class="flex h-[29px] shrink-0 items-center" aria-label="Import"><svg class="h-4 w-[14px]" viewBox="0 0 14 16"><path d="M0 0h7v4H0zM4 3h8v4H4z" fill="#4d6b7a"/><path d="M5 8.500H2.500v7h11v-7H11" fill="none" stroke="#999"/><path d="M8 2v10M4.500 9L8 12.500 11.500 9" fill="none" stroke="#fff" stroke-width="1.700"/></svg></button>
            <hr class="mt-[3px] w-5 border-[#1f1f1f]">
            <button class="mt-[3px] flex h-8 w-[27px] shrink-0 items-center justify-center rounded-xs border-3 border-[#ffff00]" aria-label="Cameras"><svg class="h-[14px] w-4"><use href="#i-camera"/></svg></button>
            <button class="flex h-[35px] shrink-0 items-center" aria-label="Gallery"><svg class="h-[14px] w-4" viewBox="0 0 16 14"><path d="M2 .5h13.500V11" fill="none" stroke="#fff"/><path d="M1 3h12v10H1z" fill="none" stroke="#fff" stroke-width="2"/><path d="M3 10l3-3 2 2 2-2 2 3" fill="none" stroke="#fff"/></svg></button>
            <button class="flex h-[32px] shrink-0 items-center" aria-label="Sounds"><svg class="h-4 w-[14px]" viewBox="0 0 14 16"><path d="M4.500 13V3l8.500-2v11" fill="none" stroke="#fff" stroke-width="1.500"/><path d="M4.500 3L13 1v3L4.500 6z" fill="#fff"/><ellipse cx="2.800" cy="13.500" rx="2.500" ry="2" fill="#fff"/><ellipse cx="11" cy="12" rx="2.500" ry="2" fill="#fff"/></svg></button>
        </aside>
    </main>

    <!-- Arrow from the camera to the item -->
    <svg class="pointer-events-none absolute top-0 left-0 h-[400px] w-[900px]" viewBox="0 0 900 400">
        <path d="M595 209L785 322" stroke="#ffff00" stroke-width="8"/>
        <path d="M813 338l-35-8 11-18z" fill="#ffff00"/>
    </svg>

    <script>
        const props = [
            ['Color', '#3e9effff', '#3e9eff'],
            ['ColorAlphaChannel', '255'],
            ['Opacity', '255'],
            ['Text', ''],
            ['FontFile', 'Tahoma (tahoma.ttf)'],
            ['FontSize', '11'],
            ['TextColor', '#c0c0c0ff', '#c0c0c0'],
            ['TextAlign', 'Center-Middle'],
            ['TextEffect', '&lt;None&gt;'],
            ['WordWrap', 'False'],
            ['Border', 'None'],
            ['BorderColor', '#ffffffff', '#ffffff'],
            ['Image', 'Camera 1'],
            ['Icon', ''],
            ['ImageAlign', 'Center-Middle'],
            ['IconAlign', 'Center-Middle'],
            ['Chameleon', ''],
            ['DrawOrder', '&nbsp;Fill Image Border Text Icon'],
            ['ImageStretch', 'Proportional'],
            ['IconStretch', 'None'],
            ['ChameleonStretch', 'None'],
            ['ImageFiltration', 'Box'],
            ['IconFiltration', 'Box'],
            ['ChameleonFiltration', 'Box'],
            ['BlurType', 'Default'],
            ['BlurDepth', '0']
        ];
        const marked = ['Image', 'ImageStretch'];
        document.getElementById('props').innerHTML = props.map(([name, value, color]) => `
            <tr class="h-5 text-[12px] ${marked.includes(name) ? 'outline-3 outline-[#ffff00]' : ''}">
                <th scope="row" class="border-r border-b border-[#383838] pl-0.5 text-left font-normal whitespace-nowrap">${name}</th>
                <td class="border-b border-[#383838] pl-0.5 whitespace-nowrap">
                    ${color ? `<span class="mr-[7px] inline-block h-4 w-4 align-middle" style="background:${color}"></span>` : ''}${value}</td>
            </tr>`).join('');

        // Up / down buttons of the number fields
        document.querySelectorAll('.spin').forEach(el => {
            el.insertAdjacentHTML('beforeend', `
                <span class="flex flex-1 flex-col items-center justify-between border-l border-[#666] bg-[#444] py-0.5 text-white">
                    <button class="flex" aria-label="Increase"><svg class="h-1 w-[7px]"><use href="#i-up"/></svg></button>
                    <button class="flex" aria-label="Decrease"><svg class="h-1 w-[7px]"><use href="#i-down"/></svg></button>
                </span>`);
        });

        // Rulers: a tick each 10 units, a number each 50
        function drawRuler(id, length, from, to, vertical) {
            let ticks = '';
            let labels = '';
            for (let n = 0; n <= length; n += 10) {
                const size = n % 50 ? 4 : 7;
                ticks += vertical ? `M${19 - size} ${n + .5}h${size}` : `M${n + .5} ${19 - size}v${size}`;
                if (n % 50 === 0) {
                    const at = n || 5;
                    labels += vertical
                        ? `<text transform="translate(9 ${at - 1}) rotate(-90)" text-anchor="middle" fill="#fff">${n}</text>`
                        : `<text x="${at}" y="9" text-anchor="middle" fill="#fff">${n}</text>`;
                }
            }
            document.getElementById(id).innerHTML = (vertical
                ? `<rect y="${from}" width="20" height="${to - from}" fill="#999"/><path d="M19.500 0v2000" stroke="#fff"/>`
                : `<rect x="${from}" width="${to - from}" height="20" fill="#999"/><path d="M0 19.500h2000" stroke="#fff"/>`)
                + `<path d="${ticks}" stroke="#fff"/>${labels}`
                + (vertical ? '' : '<path d="M30.500 0v19" stroke="#0f0"/>');
        }
        drawRuler('ruler-x', 1200, 36, 507, false);
        drawRuler('ruler-y', 890, 34, 355, true);
    </script>
</body>
</html>
